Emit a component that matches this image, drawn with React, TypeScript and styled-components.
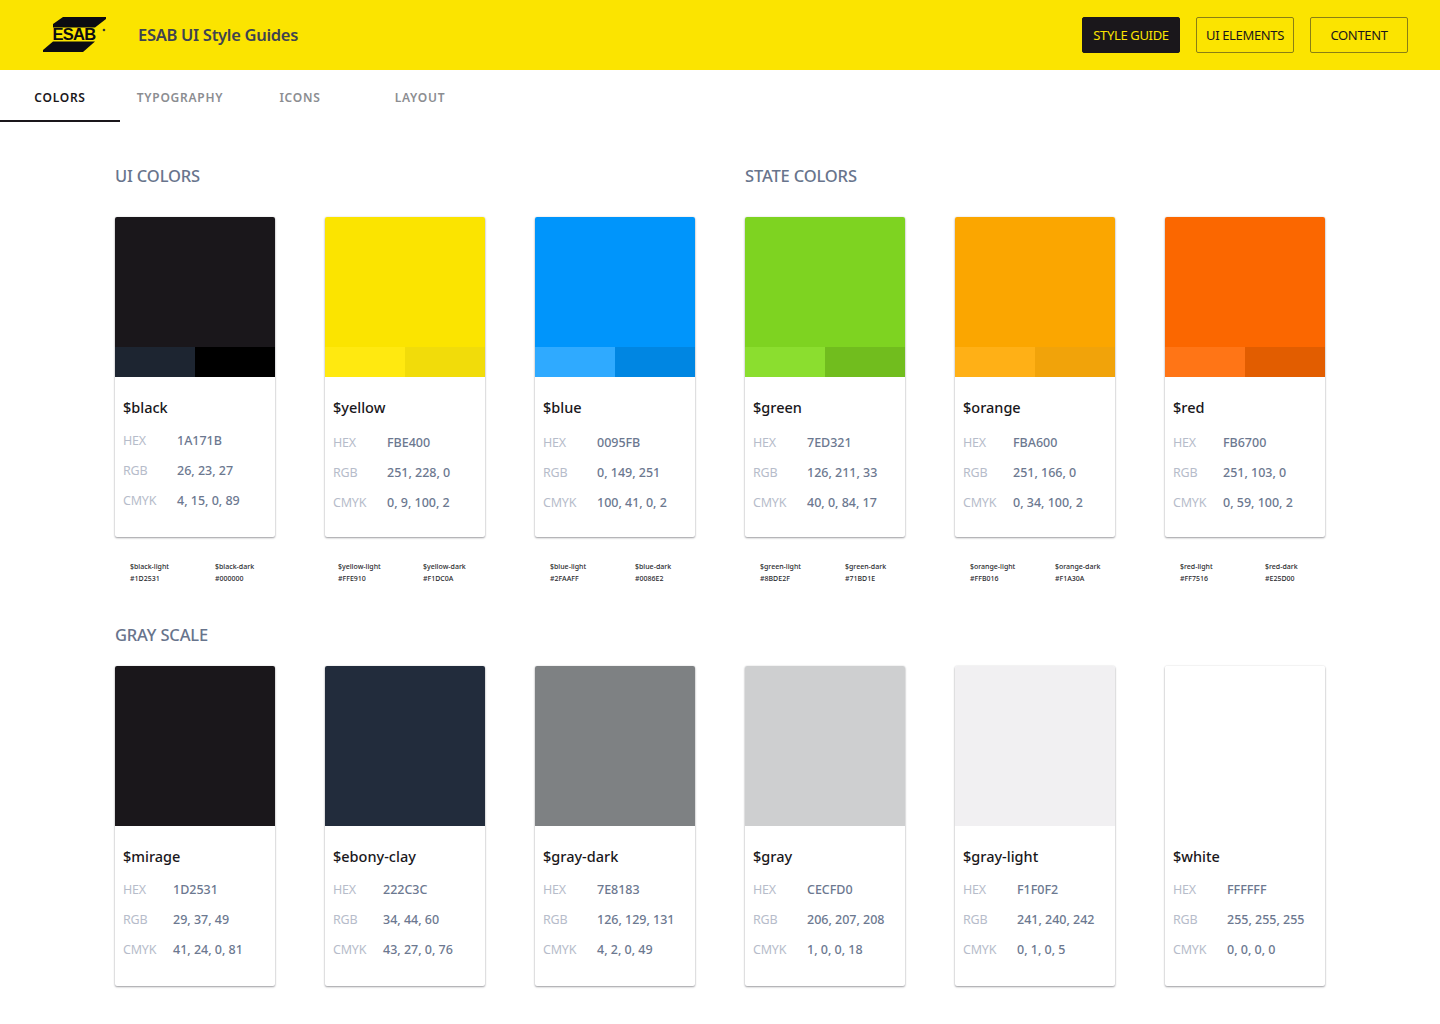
import React from 'react';
import styled, { createGlobalStyle } from 'styled-components';

const FONT = '"Noto Sans", "Open Sans", Arial, sans-serif';

const Global = createGlobalStyle`
  html, body { margin: 0; padding: 0; background: #fff; }
  body { font-family: ${FONT}; width: 1440px; height: 1024px; overflow: hidden; }
`;

const Header = styled.header`
  height: 70px; background: #fbe400; display: flex; align-items: center;
  padding: 0 32px 0 42px; box-sizing: border-box;
`;
const Logo = styled.svg`width: 66px; height: 36px; flex: none; display: block;`;
const Title = styled.h1`
  margin: 0 0 0 30px; font-size: 16.5px; font-weight: 600; color: #3f4350; letter-spacing: -0.3px; line-height: 24px; flex: 1;
`;
const Nav = styled.nav`display: flex; gap: 16px;`;
const NavButton = styled.button<{ $active?: boolean }>`
  width: 98px; height: 36px; box-sizing: border-box; border-radius: 2px; padding: 0;
  font-family: ${FONT}; font-size: 13px; letter-spacing: -0.35px; font-weight: 400; cursor: pointer;
  background: ${p => (p.$active ? '#1a171b' : 'transparent')};
  color: ${p => (p.$active ? '#fbe400' : '#1a171b')};
  border: 1px solid ${p => (p.$active ? '#1a171b' : '#8a7f14')};
`;
const Tabs = styled.div`display: flex; height: 52px;`;
const Tab = styled.div<{ $active?: boolean }>`
  width: 120px; height: 52px; box-sizing: border-box; display: flex; align-items: center; justify-content: center;
  padding-top: 4px; font-size: 12px; font-weight: 600; letter-spacing: 0.75px;
  color: ${p => (p.$active ? '#1a171b' : '#8b8d91')};
  border-bottom: 2px solid ${p => (p.$active ? '#1a171b' : 'transparent')};
`;
const Main = styled.main`padding: 42px 115px 0;`;
const HeadingRow = styled.div`display: grid; grid-template-columns: repeat(2, 580px); column-gap: 50px;`;
const Heading = styled.h2`
  margin: 0; font-size: 16.5px; line-height: 24px; font-weight: 500; color: #68748c; letter-spacing: -0.15px;
`;
const CardGrid = styled.div<{ $top: number }>`
  display: grid; grid-template-columns: repeat(6, 160px); column-gap: 50px; margin-top: ${p => p.$top}px;
`;
const Card = styled.article`
  width: 160px; height: 320px; border-radius: 2px; background: #fff; overflow: hidden;
  box-shadow: 0 1px 2px rgba(30, 30, 40, 0.42), 0 0 2px rgba(30, 30, 40, 0.12);
`;
const Swatch = styled.div<{ $c: string; $h: number }>`height: ${p => p.$h}px; background: ${p => p.$c};`;
const Shades = styled.div`display: flex; height: 30px;`;
const Shade = styled.div<{ $c: string }>`flex: 1; background: ${p => p.$c};`;
const CardBody = styled.div`padding: 18px 8px 0;`;
const Name = styled.h3`
  margin: 0; font-size: 14.5px; line-height: 24px; font-weight: 500; color: #1a171b; letter-spacing: 0;
`;
const Specs = styled.dl<{ $top: number }>`margin: ${p => p.$top}px 0 0;`;
const SpecRow = styled.div<{ $offset: number }>`
  display: grid; grid-template-columns: ${p => p.$offset}px 1fr; height: 30px; align-items: center;
  font-size: 12.5px;
`;
const SpecLabel = styled.dt`color: #b6bcca; letter-spacing: -0.2px;`;
const SpecValue = styled.dd`margin: 0; color: #6c7890; font-weight: 500; white-space: nowrap; letter-spacing: -0.02px;`;
const VariantGrid = styled.div`
  display: grid; grid-template-columns: repeat(6, 160px); column-gap: 50px; margin-top: 24px; height: 24px;
`;
const VariantPair = styled.div<{ $left: number }>`
  display: grid; grid-template-columns: 85px 1fr; padding-left: ${p => p.$left}px;
`;
const Variant = styled.div`
  font-size: 7px; line-height: 12px; font-weight: 500; color: #2a2a2e; white-space: nowrap; letter-spacing: 0;
`;
const SecondHeading = styled.div`margin-top: 38px;`;

type Color = {
  name: string; hex: string; rgb: string; cmyk: string; offset: number; top: number;
};
const top: (Color & { light: string; dark: string; left?: number })[] = [
  { name: '$black', hex: '1A171B', rgb: '26, 23, 27', cmyk: '4, 15, 0, 89', offset: 54, top: 6, light: '1D2531', dark: '000000' },
  { name: '$yellow', hex: 'FBE400', rgb: '251, 228, 0', cmyk: '0, 9, 100, 2', offset: 54, top: 8, light: 'FFE910', dark: 'F1DC0A', left: 13 },
  { name: '$blue', hex: '0095FB', rgb: '0, 149, 251', cmyk: '100, 41, 0, 2', offset: 54, top: 8, light: '2FAAFF', dark: '0086E2' },
  { name: '$green', hex: '7ED321', rgb: '126, 211, 33', cmyk: '40, 0, 84, 17', offset: 54, top: 8, light: '8BDE2F', dark: '71BD1E' },
  { name: '$orange', hex: 'FBA600', rgb: '251, 166, 0', cmyk: '0, 34, 100, 2', offset: 50, top: 8, light: 'FFB016', dark: 'F1A30A' },
  { name: '$red', hex: 'FB6700', rgb: '251, 103, 0', cmyk: '0, 59, 100, 2', offset: 50, top: 8, light: 'FF7516', dark: 'E25D00' },
];
const gray: Color[] = [
  { name: '$mirage', hex: '1D2531', rgb: '29, 37, 49', cmyk: '41, 24, 0, 81', offset: 50, top: 6 },
  { name: '$ebony-clay', hex: '222C3C', rgb: '34, 44, 60', cmyk: '43, 27, 0, 76', offset: 50, top: 6 },
  { name: '$gray-dark', hex: '7E8183', rgb: '126, 129, 131', cmyk: '4, 2, 0, 49', offset: 54, top: 6 },
  { name: '$gray', hex: 'CECFD0', rgb: '206, 207, 208', cmyk: '1, 0, 0, 18', offset: 54, top: 6 },
  { name: '$gray-light', hex: 'F1F0F2', rgb: '241, 240, 242', cmyk: '0, 1, 0, 5', offset: 54, top: 6 },
  { name: '$white', hex: 'FFFFFF', rgb: '255, 255, 255', cmyk: '0, 0, 0, 0', offset: 54, top: 6 },
];
const swatchMain: Record<string, string> = { '$mirage': '1A171B' };

const Details = ({ c }: { c: Color }) => (
  <CardBody>
    <Name>{c.name}</Name>
    <Specs $top={c.top}>
      {[['HEX', c.hex], ['RGB', c.rgb], ['CMYK', c.cmyk]].map(([l, v]) => (
        <SpecRow key={l} $offset={c.offset}>
          <SpecLabel>{l}</SpecLabel>
          <SpecValue>{v}</SpecValue>
        </SpecRow>
      ))}
    </Specs>
  </CardBody>
);

export default function App() {
  return (
    <>
      <Global />
      <Header>
        <Logo viewBox="0 0 66 36" aria-label="ESAB">
          <polygon points="21,0 64,0 64,2 53,10.5 11,10.5 11,7" fill="#0b0b12" />
          <polygon points="11,24.5 53,24.5 41,35 1,35 1,33" fill="#0b0b12" />
          <text x="10.5" y="23.2" fontFamily='"Liberation Sans", Arial, sans-serif' fontWeight="700" fontSize="16.5" letterSpacing="-0.7" fill="#0b0b12">ESAB</text>
          <circle cx="62" cy="13" r="1.3" fill="#3a3a30" />
        </Logo>
        <Title>ESAB UI Style Guides</Title>
        <Nav>
          <NavButton $active>STYLE GUIDE</NavButton>
          <NavButton>UI ELEMENTS</NavButton>
          <NavButton>CONTENT</NavButton>
        </Nav>
      </Header>
      <Tabs>
        <Tab $active>COLORS</Tab>
        <Tab>TYPOGRAPHY</Tab>
        <Tab>ICONS</Tab>
        <Tab>LAYOUT</Tab>
      </Tabs>
      <Main>
        <HeadingRow>
          <Heading>UI COLORS</Heading>
          <Heading>STATE COLORS</Heading>
        </HeadingRow>
        <CardGrid $top={29}>
          {top.map(c => (
            <Card key={c.name}>
              <Swatch $c={`#${c.hex}`} $h={130} />
              <Shades>
                <Shade $c={`#${c.light}`} />
                <Shade $c={`#${c.dark}`} />
              </Shades>
              <Details c={c} />
            </Card>
          ))}
        </CardGrid>
        <VariantGrid>
          {top.map(c => (
            <VariantPair key={c.name} $left={c.left ?? 15}>
              <Variant>{c.name}-light<br />#{c.light}</Variant>
              <Variant>{c.name}-dark<br />#{c.dark}</Variant>
            </VariantPair>
          ))}
        </VariantGrid>
        <SecondHeading><Heading>GRAY SCALE</Heading></SecondHeading>
        <CardGrid $top={19}>
          {gray.map(c => (
            <Card key={c.name}>
              <Swatch $c={`#${swatchMain[c.name] ?? c.hex}`} $h={160} />
              <Details c={c} />
            </Card>
          ))}
        </CardGrid>
      </Main>
    </>
  );
}
